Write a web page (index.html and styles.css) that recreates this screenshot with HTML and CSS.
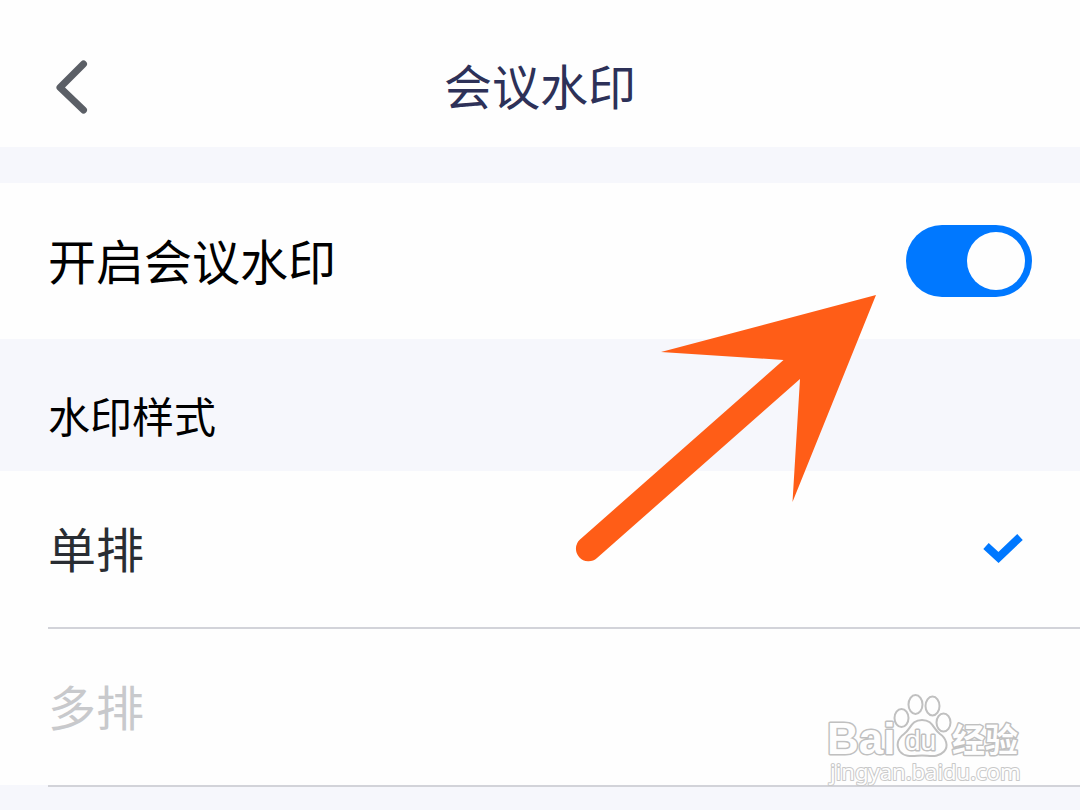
FILE: index.html
```html
<!DOCTYPE html>
<html lang="zh-CN">
<head>
<meta charset="utf-8">
<meta name="viewport" content="width=device-width, initial-scale=1">
<title>会议水印</title>
<link rel="stylesheet" href="styles.css">
</head>
<body>
<main class="page">
  <header class="header">
    <button class="back" type="button" aria-label="返回">
      <svg class="back-icon" viewBox="0 0 34 54" aria-hidden="true"><path d="M28.500 4 5 27.500 28.500 50"/></svg>
    </button>
    <h1 class="title">会议水印</h1>
  </header>

  <div class="row">
    <label class="label" for="watermark">开启会议水印</label>
    <input class="switch" id="watermark" type="checkbox" role="switch" checked>
  </div>

  <h2 class="section-title" id="style-title">水印样式</h2>

  <div class="options" role="radiogroup" aria-labelledby="style-title">
    <label class="option">
      <span class="option-text">单排</span>
      <input class="radio" type="radio" name="style" value="single" checked>
      <svg class="check" viewBox="0 0 40 30" aria-hidden="true"><path d="M3 12 15.500 23.500 37 3"/></svg>
    </label>
    <label class="option">
      <span class="option-text option-muted">多排</span>
      <input class="radio" type="radio" name="style" value="multiple">
      <svg class="check" viewBox="0 0 40 30" aria-hidden="true"><path d="M3 12 15.500 23.500 37 3"/></svg>
    </label>
  </div>

  <svg class="arrow" viewBox="560 280 320 300" aria-hidden="true">
    <path d="M876 295 661 352 783.500 360 580 539.500A12.500 12.500 0 0 0 597 558L800 379 792.500 502Z"/>
  </svg>

  <svg class="brand" viewBox="820 685 210 105" role="img" aria-label="Baidu 经验">
    <text class="brand-latin" x="827" y="754">Bai</text>
    <g class="brand-paw">
      <ellipse cx="901.500" cy="718" rx="7" ry="9"/>
      <ellipse cx="915.500" cy="704.500" rx="7" ry="9.500"/>
      <ellipse cx="932.500" cy="706" rx="7" ry="9.500"/>
      <ellipse cx="943.500" cy="722.500" rx="7" ry="9"/>
      <path d="M922 720C911 720 911 729 904 734C897 739 896 746 900 751.500C905 758 915 755.500 922 755.500C930 755.500 938 758 944 751.500C949 746 946 738 940 734C933 729 933 720 922 720Z"/>
    </g>
    <text class="brand-du" x="905" y="750">du</text>
    <text class="brand-cjk" x="952" y="752">经验</text>
    <text class="brand-url" x="830" y="780">jingyan.baidu.com</text>
  </svg>
</main>
</body>
</html>
```
FILE: styles.css
```css
* {
  box-sizing: border-box;
}

body {
  margin: 0;
  background: #f6f7fc;
  font-family: "Noto Sans CJK SC", sans-serif;
  font-size: 48px;
  line-height: 72px;
  color: #000;
}

.page {
  position: relative;
  overflow: hidden;
  min-height: 100vh;
}

.header {
  display: grid;
  grid-template-columns: 72px 1fr 72px;
  align-items: center;
  padding: 48px 36px 21px;
  margin-bottom: 36px;
  background: #fefefe;
}

.back {
  display: flex;
  justify-content: center;
  padding: 0;
  border: 0;
  background: none;
  cursor: pointer;
}

.back-icon {
  width: 34px;
  height: 54px;
  fill: none;
  stroke: #5b5f66;
  stroke-width: 7;
  stroke-linecap: round;
  stroke-linejoin: round;
}

.title {
  margin: 0;
  padding-bottom: 6px;
  font-size: 48px;
  font-weight: 400;
  text-align: center;
  color: #2d3158;
}

.row {
  display: flex;
  align-items: center;
  justify-content: space-between;
  padding: 40px 48px;
  background: #fefefe;
}

.label {
  padding-bottom: 4px;
}

.switch {
  appearance: none;
  display: flex;
  width: 126px;
  height: 72px;
  margin: 0;
  padding: 7px;
  border-radius: 36px;
  background: #b8bcc6;
  cursor: pointer;
}

.switch::before {
  content: "";
  width: 58px;
  height: 58px;
  border-radius: 50%;
  background: #fefefe;
}

.switch:checked {
  justify-content: flex-end;
  background: #0078ff;
}

.section-title {
  margin: 0;
  padding: 46px 48px 26px;
  font-size: 42px;
  font-weight: 400;
  line-height: 60px;
}

.options {
  display: flow-root;
  background: #fefefe;
}

.option {
  display: flex;
  align-items: center;
  justify-content: space-between;
  margin-left: 48px;
  padding: 40px 57px 40px 0;
  border-bottom: 2px solid #d2d3d9;
  color: #292d33;
  cursor: pointer;
}

.option:last-child {
  margin-bottom: -2px;
}

.option-text {
  padding-bottom: 4px;
}

.option-muted {
  color: #c8c9cc;
}

.radio {
  appearance: none;
  width: 0;
  height: 0;
  margin: 0;
}

.check {
  visibility: hidden;
  overflow: visible;
  width: 40px;
  height: 30px;
  fill: none;
  stroke: #0078ff;
  stroke-width: 8;
}

.radio:checked + .check {
  visibility: visible;
}

.arrow {
  position: absolute;
  top: 280px;
  right: 200px;
  width: 320px;
  height: 300px;
  fill: #ff5d17;
  pointer-events: none;
}

.brand {
  position: absolute;
  top: 685px;
  right: 50px;
  width: 210px;
  height: 105px;
  fill: #fefefe;
  stroke: #c0c0c0;
  stroke-width: 3;
  stroke-linejoin: round;
  paint-order: stroke;
  pointer-events: none;
}

.brand-latin {
  font: 700 44px "Liberation Sans", sans-serif;
}

.brand-paw {
  stroke-width: 2;
  paint-order: normal;
}

.brand-du {
  font: 400 28px "Liberation Sans", sans-serif;
}

.brand-cjk {
  font: 700 33px "Noto Sans CJK SC", sans-serif;
}

.brand-url {
  font: 400 22px "Noto Sans", sans-serif;
  stroke: #c8c8c8;
  stroke-width: 2;
}
```
